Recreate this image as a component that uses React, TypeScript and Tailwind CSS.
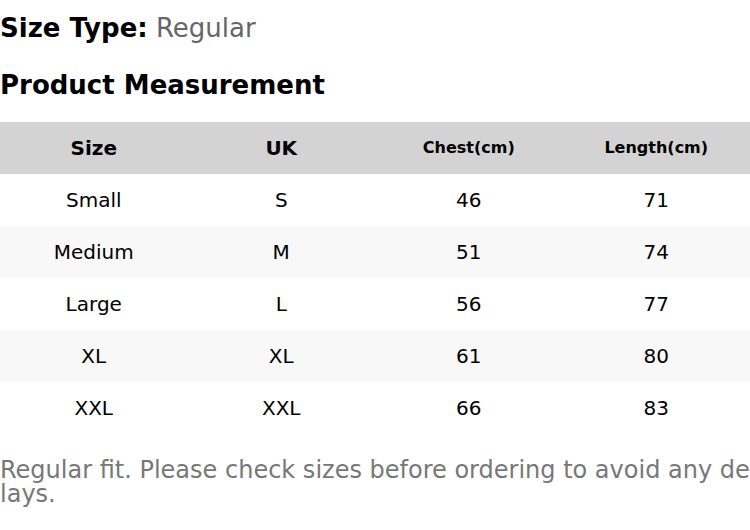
const rows = [
  { size: "Small", uk: "S", chest: 46, length: 71 },
  { size: "Medium", uk: "M", chest: 51, length: 74 },
  { size: "Large", uk: "L", chest: 56, length: 77 },
  { size: "XL", uk: "XL", chest: 61, length: 80 },
  { size: "XXL", uk: "XXL", chest: 66, length: 83 },
];

export default function App() {
  return (
    <div className="w-[750px] h-[530px] bg-white text-black font-['DejaVu_Sans',sans-serif] overflow-hidden">
      <div className="pt-[10px] text-[26px] leading-[36px]">
        <span className="font-bold">Size Type:</span>{" "}
        <span className="text-[#666]">Regular</span>
      </div>
      <h2 className="mt-[23px] text-[26px] leading-[32px] font-bold">
        Product Measurement
      </h2>

      <table className="mt-[21px] w-full border-collapse table-fixed">
        <thead>
          <tr className="bg-[#d3d3d3] h-[52px]">
            <th className="text-[20px] font-bold">Size</th>
            <th className="text-[20px] font-bold">UK</th>
            <th className="text-[16px] font-bold">Chest(cm)</th>
            <th className="text-[16px] font-bold">Length(cm)</th>
          </tr>
        </thead>
        <tbody>
          {rows.map((r, i) => (
            <tr
              key={r.size}
              className={`h-[52px] text-[20px] ${i % 2 === 1 ? "bg-[#f8f8f8]" : "bg-white"}`}
            >
              <td className="text-center">{r.size}</td>
              <td className="text-center">{r.uk}</td>
              <td className="text-center">{r.chest}</td>
              <td className="text-center">{r.length}</td>
            </tr>
          ))}
        </tbody>
      </table>

      <p className="mt-[24px] text-[24px] leading-[24px] text-[#777] break-all">
        Regular fit. Please check sizes before ordering to avoid any delays.
      </p>
    </div>
  );
}
